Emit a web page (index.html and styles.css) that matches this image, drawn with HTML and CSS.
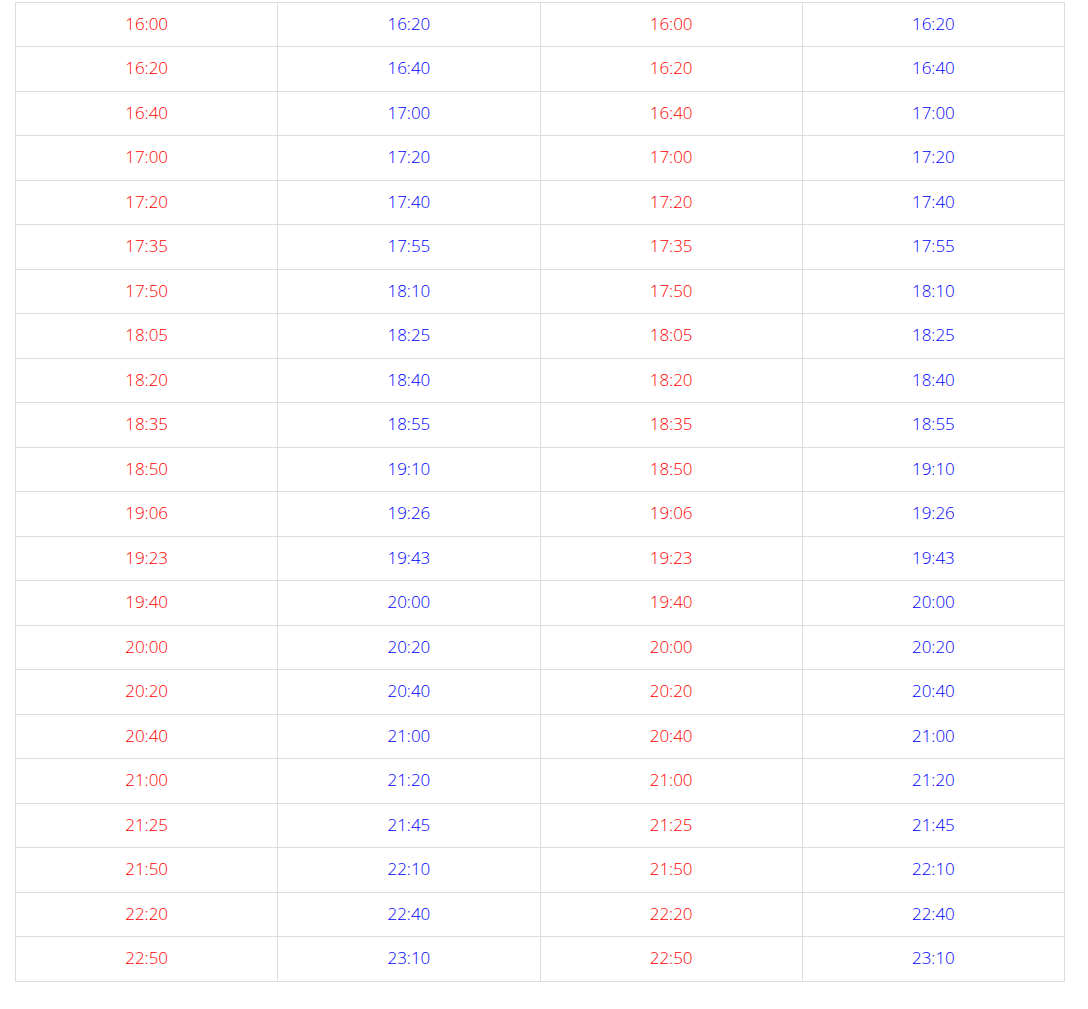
FILE: index.html
```html
<!DOCTYPE html>
<html>
<head>
<meta charset="utf-8">
<link rel="stylesheet" href="styles.css">
</head>
<body>
<div class="wrap">
<table class="timetable">
<tbody>
<tr><td class="dep">16:00</td><td class="arr">16:20</td><td class="dep">16:00</td><td class="arr">16:20</td></tr>
<tr><td class="dep">16:20</td><td class="arr">16:40</td><td class="dep">16:20</td><td class="arr">16:40</td></tr>
<tr><td class="dep">16:40</td><td class="arr">17:00</td><td class="dep">16:40</td><td class="arr">17:00</td></tr>
<tr><td class="dep">17:00</td><td class="arr">17:20</td><td class="dep">17:00</td><td class="arr">17:20</td></tr>
<tr><td class="dep">17:20</td><td class="arr">17:40</td><td class="dep">17:20</td><td class="arr">17:40</td></tr>
<tr><td class="dep">17:35</td><td class="arr">17:55</td><td class="dep">17:35</td><td class="arr">17:55</td></tr>
<tr><td class="dep">17:50</td><td class="arr">18:10</td><td class="dep">17:50</td><td class="arr">18:10</td></tr>
<tr><td class="dep">18:05</td><td class="arr">18:25</td><td class="dep">18:05</td><td class="arr">18:25</td></tr>
<tr><td class="dep">18:20</td><td class="arr">18:40</td><td class="dep">18:20</td><td class="arr">18:40</td></tr>
<tr><td class="dep">18:35</td><td class="arr">18:55</td><td class="dep">18:35</td><td class="arr">18:55</td></tr>
<tr><td class="dep">18:50</td><td class="arr">19:10</td><td class="dep">18:50</td><td class="arr">19:10</td></tr>
<tr><td class="dep">19:06</td><td class="arr">19:26</td><td class="dep">19:06</td><td class="arr">19:26</td></tr>
<tr><td class="dep">19:23</td><td class="arr">19:43</td><td class="dep">19:23</td><td class="arr">19:43</td></tr>
<tr><td class="dep">19:40</td><td class="arr">20:00</td><td class="dep">19:40</td><td class="arr">20:00</td></tr>
<tr><td class="dep">20:00</td><td class="arr">20:20</td><td class="dep">20:00</td><td class="arr">20:20</td></tr>
<tr><td class="dep">20:20</td><td class="arr">20:40</td><td class="dep">20:20</td><td class="arr">20:40</td></tr>
<tr><td class="dep">20:40</td><td class="arr">21:00</td><td class="dep">20:40</td><td class="arr">21:00</td></tr>
<tr><td class="dep">21:00</td><td class="arr">21:20</td><td class="dep">21:00</td><td class="arr">21:20</td></tr>
<tr><td class="dep">21:25</td><td class="arr">21:45</td><td class="dep">21:25</td><td class="arr">21:45</td></tr>
<tr><td class="dep">21:50</td><td class="arr">22:10</td><td class="dep">21:50</td><td class="arr">22:10</td></tr>
<tr><td class="dep">22:20</td><td class="arr">22:40</td><td class="dep">22:20</td><td class="arr">22:40</td></tr>
<tr><td class="dep">22:50</td><td class="arr">23:10</td><td class="dep">22:50</td><td class="arr">23:10</td></tr>
</tbody>
</table>
</div>
</body>
</html>
```
FILE: styles.css
```css
html, body {
  margin: 0;
  padding: 0;
  background: #fff;
}
.wrap {
  padding: 1.5px 23px 0 15px;
}
.timetable {
  width: 1050px;
  border-collapse: collapse;
  table-layout: fixed;
  font-family: "Open Sans", sans-serif;
  font-size: 17px;
  font-weight: 300;
  line-height: 25.5px;
}
.timetable td {
  border: 1px solid #dddddd;
  padding: 8px 8px 10px;
  text-align: center;
}
.dep { color: #ff0000; }
.arr { color: #0000ff; }
```
